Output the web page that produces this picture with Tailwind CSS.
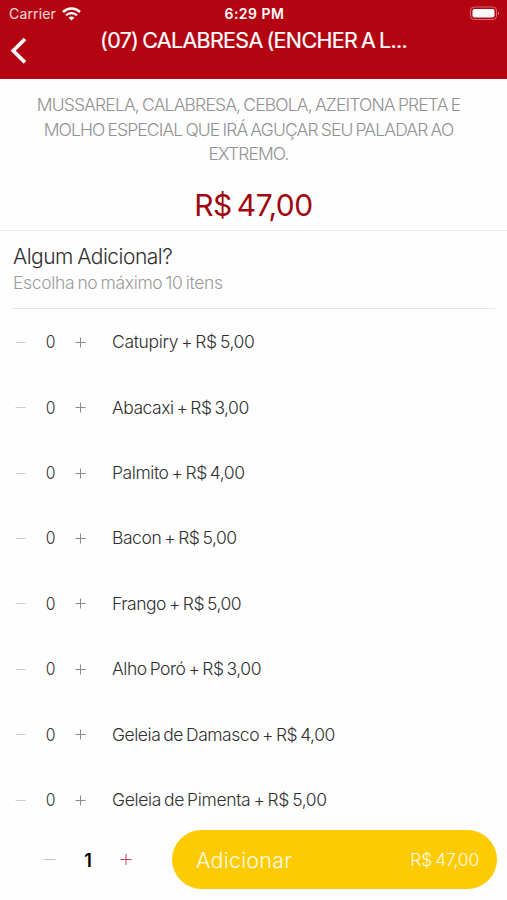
<!DOCTYPE html>
<html lang="pt-BR">
<head>
<meta charset="utf-8">
<title>Adicionais</title>
<script src="https://cdn.jsdelivr.net/npm/@tailwindcss/browser@4"></script>
</head>
<body class="bg-[#fefefe]">
<main class="flex h-[900px] w-[507px] flex-col overflow-hidden whitespace-nowrap font-[Inter,sans-serif] text-[#303030]">
  <header class="h-[79px] shrink-0 bg-[#b40411] text-white">
    <div class="grid h-[27px] grid-cols-3 items-center pl-[9px] pr-[7px]">
      <div class="flex items-center gap-[6px] text-[14px] tracking-[0.15px] text-white/85">Carrier
        <svg class="h-[14px] w-[19px]" viewBox="0 0 19 14" fill="none" stroke="#fff"><path d="M1 5C5.8.4 13.2.4 18 5" stroke-width="2.5"/><path d="M4 8.3c3-3 8-3 11 0" stroke-width="2.3"/><path d="M6.6 10.7c1.7-1.6 4.1-1.6 5.8 0L9.5 13.6z" fill="#fff" stroke="none"/></svg>
      </div>
      <div class="text-center text-[14px] font-semibold tracking-[0.5px]">6:29 PM</div>
      <svg class="h-[15px] w-[31px] justify-self-end" viewBox="0 0 31 15"><rect x="1.5" y="1" width="26" height="12.5" rx="3.5" fill="none" stroke="#fff" stroke-opacity=".4"/><rect x="3.5" y="3" width="22" height="8.6" rx="2" fill="#fff"/><path d="M29 5.5q2 1.8 0 3.6z" fill="#fff" opacity=".6"/></svg>
    </div>
    <div class="grid grid-cols-[100px_308px_1fr]">
      <svg class="mt-[10px] ml-[9.5px] h-[27px] w-[18px]" viewBox="0 0 18 27" fill="none" stroke="#fff" stroke-width="3.6"><path d="M15 2 3.2 13.7 15 25.4"/></svg>
      <h1 class="text-[21.5px] leading-[27px] tracking-[-0.68px] [word-spacing:-1.5px] [-webkit-text-stroke:0.2px_white]">(07) CALABRESA (ENCHER A L...</h1>
    </div>
  </header>
  <section class="h-[152px] shrink-0 border-b border-[#eaeaea] pt-[14px] text-center">
    <div class="flex flex-col items-center pr-[10px] text-[17.5px] leading-[24.5px] font-light text-[#929292]">
      <p class="tracking-[-0.84px] [word-spacing:-1px]">MUSSARELA, CALABRESA, CEBOLA, AZEITONA PRETA E</p>
      <p class="tracking-[-0.87px] [word-spacing:-1px]">MOLHO ESPECIAL QUE IRÁ AGUÇAR SEU PALADAR AO</p>
      <p class="tracking-[-0.87px]">EXTREMO.</p>
    </div>
    <p class="mt-[20.5px] text-[30px] leading-[36px] tracking-[-0.48px] text-[#a0060f] [word-spacing:-3px]">R$ 47,00</p>
  </section>
  <section class="mr-[12px] ml-[13px] h-[78px] shrink-0 border-b border-[#e6e6e6] pt-[12px]">
    <h2 class="text-[21px] leading-[27px] font-light tracking-[-0.5px] [word-spacing:-1px]">Algum Adicional?</h2>
    <p class="text-[17.5px] leading-[26px] font-light tracking-[-0.33px] text-[#9b9b9b] [word-spacing:-1.5px]">Escolha no máximo 10 itens</p>
  </section>
  <ul id="items" class="flex h-[524px] shrink-0 flex-col pt-[0.5px] text-[17.5px] font-light [word-spacing:-1.5px]"></ul>
  <footer class="-mt-[3px] flex h-[59px] shrink-0 items-center pl-[44px]">
    <svg class="h-3 w-3" viewBox="0 0 12 12" stroke="#dfb3b8"><path d="M.5 5.5H11.5"/></svg>
    <span class="w-[64px] pt-[2px] text-center text-[18px] font-semibold text-black">1</span>
    <svg class="h-3 w-3" viewBox="0 0 12 12" stroke="#b74453"><path d="M.5 5.5H11.5M6 0V11"/></svg>
    <button class="ml-[40px] flex h-[59px] w-[325px] items-center justify-between rounded-full bg-[#fecb02] pt-[2px] pr-[18px] pl-[24px] font-light text-[#fffbe8]">
      <span class="text-[21.5px] tracking-[0.2px]">Adicionar</span>
      <span class="text-[17.5px] tracking-[-0.2px] [word-spacing:-1.5px]">R$ 47,00</span>
    </button>
  </footer>
</main>
<template id="row">
  <li class="flex h-[65.45px] shrink-0 items-center pl-[15px]">
    <svg class="h-[11px] w-[11px]" viewBox="0 0 11 11" stroke="#ccc"><path d="M.5 5.5H10.5"/></svg>
    <span class="w-[49px] scale-x-90 text-center">0</span>
    <svg class="h-[11px] w-[11px]" viewBox="0 0 11 11" stroke="#8a8a8a"><path d="M.5 5.5H10.5M5.5 .5V10.5"/></svg>
    <span class="name ml-[26px]"></span>
  </li>
</template>
<script>
  const items = [
    ["Catupiry + R$ 5,00", -0.34], ["Abacaxi + R$ 3,00", -0.5], ["Palmito + R$ 4,00", -0.43],
    ["Bacon + R$ 5,00", -0.44], ["Frango + R$ 5,00", -0.47], ["Alho Poró + R$ 3,00", -0.46],
    ["Geleia de Damasco + R$ 4,00", -0.46], ["Geleia de Pimenta + R$ 5,00", -0.35]
  ];
  const row = document.getElementById("row"), list = document.getElementById("items");
  for (const [label, spacing] of items) {
    const node = row.content.cloneNode(true), name = node.querySelector(".name");
    name.textContent = label;
    name.style.letterSpacing = spacing + "px";
    list.append(node);
  }
</script>
</body>
</html>
